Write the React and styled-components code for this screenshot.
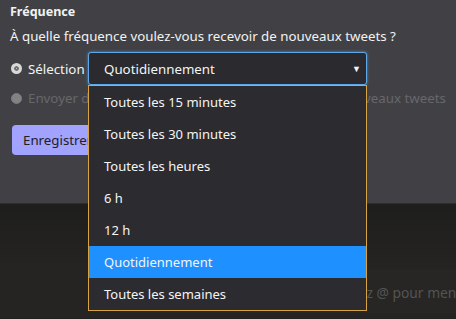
import React from "react";
import styled, { createGlobalStyle } from "styled-components";

const OPTIONS = [
  "Toutes les 15 minutes",
  "Toutes les 30 minutes",
  "Toutes les heures",
  "6 h",
  "12 h",
  "Quotidiennement",
  "Toutes les semaines",
];
const SELECTED = "Quotidiennement";

const GlobalStyle = createGlobalStyle`
  html, body {
    margin: 0;
    padding: 0;
    background: #222120;
    font-family: "Noto Sans", "Open Sans", sans-serif;
    font-size: 13.3px;
  }
`;

const App = () => {
  return (
    <Page>
      <GlobalStyle />
      <Panel>
        <Title>Fréquence</Title>
        <Question>À quelle fréquence voulez-vous recevoir de nouveaux tweets ?</Question>
        <OptionRow>
          <Radio checked />
          <OptionLabel width="60px">Sélection</OptionLabel>
          <SelectWrap>
            <SelectBox>
              <span>{SELECTED}</span>
              <Arrow>▼</Arrow>
            </SelectBox>
            <Dropdown>
              {OPTIONS.map((opt) => (
                <Item key={opt} active={opt === SELECTED}>
                  {opt}
                </Item>
              ))}
            </Dropdown>
          </SelectWrap>
        </OptionRow>
        <OptionRow disabled>
          <Radio disabled />
          <OptionLabel disabled>Envoyer dès qu'il y a un nombre minimum fixé de nouveaux tweets</OptionLabel>
        </OptionRow>
        <SaveBtn>Enregistrer</SaveBtn>
      </Panel>
      <Bottom>
        <Composer>Tapez @ pour mentionner</Composer>
      </Bottom>
    </Page>
  );
};

export default App;

const Page = styled.div`
  width: 456px;
  height: 319px;
  overflow: hidden;
  background: #222120;
`;

const Panel = styled.div`
  height: 204px;
  box-sizing: border-box;
  background: #414145;
  border-bottom: 1px solid #2e2e2e;
  padding: 2px 10px 0;
  color: #f2f2f2;
`;

const Title = styled.div`
  font-size: 12.5px;
  font-weight: 700;
  line-height: 20px;
`;

const Question = styled.div`
  font-size: 13.3px;
  line-height: 24px;
  margin-top: 2px;
`;

const OptionRow = styled.div`
  display: flex;
  align-items: center;
  height: ${(p) => (p.disabled ? "28px" : "33px")};
  margin-top: ${(p) => (p.disabled ? "-1px" : "4px")};
`;

const Radio = styled.span`
  width: 11px;
  height: 11px;
  box-sizing: border-box;
  border-radius: 50%;
  margin: 0 6px 0 1px;
  flex-shrink: 0;
  background: ${(p) => (p.disabled ? "#b9b9b9" : "#e6e6e6")};
  border: ${(p) => (p.checked ? "3px solid #d8d8d8" : "1px solid #aaa")};
  box-shadow: ${(p) => (p.checked ? "inset 0 0 0 2px #6d6d6d" : "none")};
  opacity: ${(p) => (p.disabled ? 0.55 : 1)};
`;

const OptionLabel = styled.span`
  width: ${(p) => p.width || "auto"};
  flex-shrink: 0;
  font-size: 13.3px;
  white-space: nowrap;
  color: ${(p) => (p.disabled ? "#67676b" : "#f2f2f2")};
`;

const SelectWrap = styled.div`
  position: relative;
`;

const SelectBox = styled.div`
  width: 279px;
  height: 33px;
  box-sizing: border-box;
  display: flex;
  align-items: center;
  justify-content: space-between;
  padding: 0 5px 0 15px;
  background: #2b2a2f;
  border: 1px solid #5ea8ea;
  border-radius: 3px;
  box-shadow: 0 0 3px rgba(94, 168, 234, 0.8);
  color: #f4f4f4;
  font-size: 13.3px;
`;

const Arrow = styled.span`
  font-size: 9px;
  color: #f4f4f4;
`;

const Dropdown = styled.div`
  position: absolute;
  top: 33px;
  left: 0;
  width: 279px;
  box-sizing: border-box;
  border: 1px solid #d8a443;
  background: #2c2b30;
  z-index: 5;
`;

const Item = styled.div`
  height: 32px;
  display: flex;
  align-items: center;
  padding-left: 15px;
  font-size: 13px;
  color: #f4f4f4;
  background: ${(p) => (p.active ? "#1e90ff" : "transparent")};
`;

const SaveBtn = styled.button`
  margin: 13px 0 0 2px;
  height: 30px;
  padding: 0 11px;
  border: none;
  border-radius: 4px;
  background: #a2a2ff;
  color: #202024;
  font-family: inherit;
  font-size: 13.3px;
`;

const Bottom = styled.div`
  height: 114px;
  background: linear-gradient(#1e1e1c, #252422 60%);
  padding-top: 65px;
  box-sizing: border-box;
`;

const Composer = styled.div`
  height: 44px;
  margin-left: 120px;
  background: #272624;
  color: #545452;
  font-size: 13.8px;
  display: flex;
  align-items: center;
  padding: 2px 0 0 216px;
  box-sizing: border-box;
  white-space: nowrap;
`;
